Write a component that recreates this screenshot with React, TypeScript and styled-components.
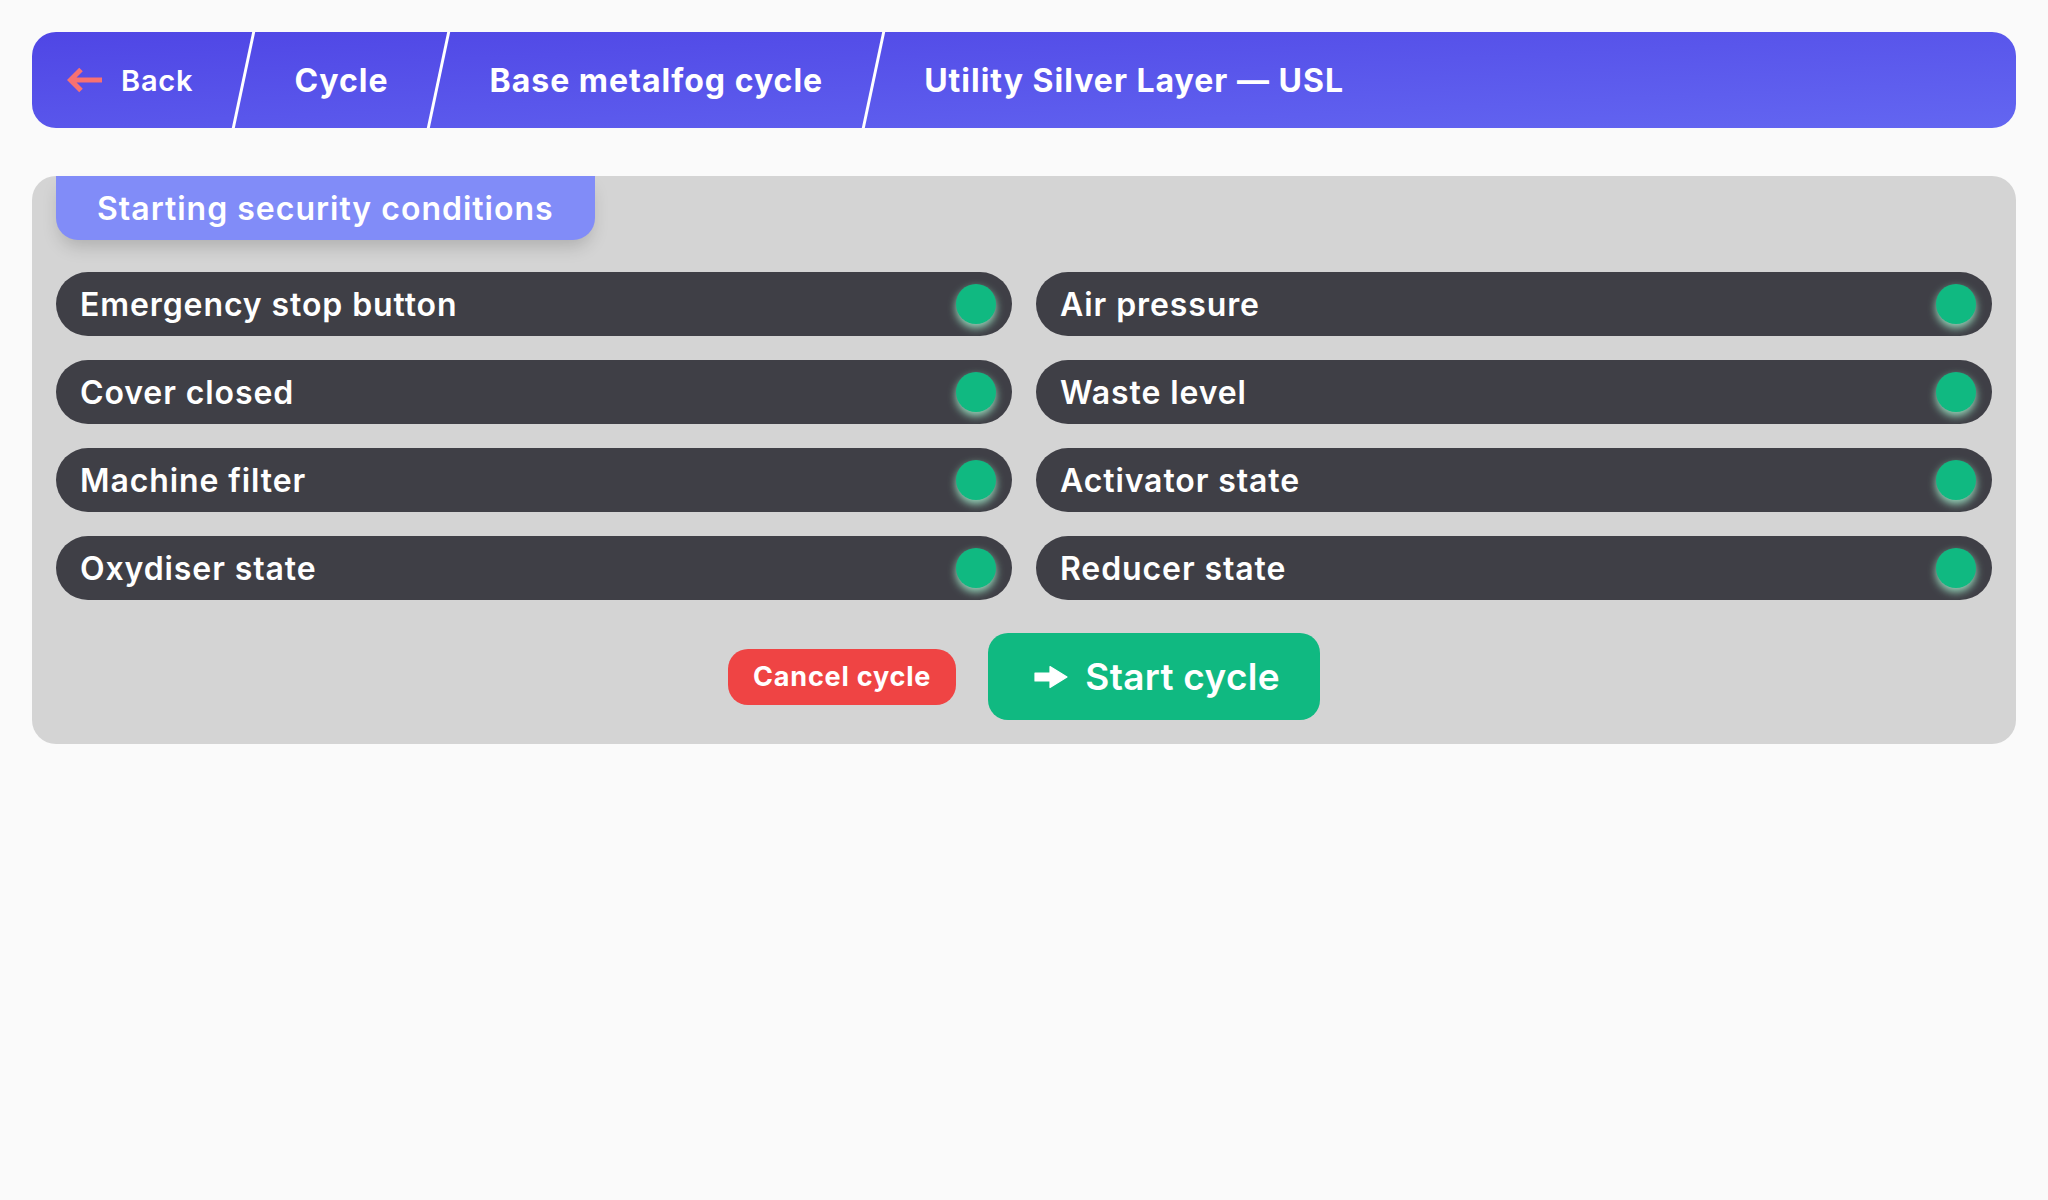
import React from "react";
import styled, { createGlobalStyle } from "styled-components";

const GlobalStyle = createGlobalStyle`
  html, body {
    margin: 0;
    padding: 0;
    background: #fafafa;
  }
  body {
    font-family: Inter, "Open Sans", "Noto Sans", sans-serif;
    -webkit-font-smoothing: antialiased;
  }
  * { box-sizing: border-box; }
`;

const Page = styled.div`
  padding: 32px;
  min-height: 1200px;
  display: flex;
  flex-direction: column;
  gap: 48px;
`;

const Header = styled.nav`
  height: 96px;
  border-radius: 24px;
  background: linear-gradient(to bottom right, #4f46e5, #6366f1);
  display: flex;
  align-items: stretch;
  overflow: hidden;
`;

const Crumb = styled.div<{ $first?: boolean }>`
  display: flex;
  align-items: center;
  gap: 18px;
  padding: 0 49px 0 ${(p) => (p.$first ? "35px" : "49px")};
  color: #ffffff;
  font-size: ${(p) => (p.$first ? "29px" : "32px")};
  font-weight: ${(p) => (p.$first ? 600 : 700)};
  letter-spacing: ${(p) => (p.$first ? "0.8px" : "1px")};
  white-space: nowrap;
  cursor: pointer;
`;

const Separator = styled.div`
  width: 3px;
  flex: none;
  background: #ffffff;
  transform: skewX(-12deg);
`;

const Panel = styled.section`
  background: #d4d4d4;
  border-radius: 24px;
  padding: 0 24px 24px;
  display: flex;
  flex-direction: column;
`;

const Tab = styled.div`
  align-self: flex-start;
  height: 64px;
  padding: 0 41px;
  display: flex;
  align-items: center;
  background: #818cf8;
  color: #ffffff;
  border-radius: 0 0 22px 22px;
  font-size: 32px;
  font-weight: 600;
  letter-spacing: 1px;
  box-shadow: 0 10px 18px -4px rgba(0, 0, 0, 0.18);
`;

const Grid = styled.div`
  margin-top: 32px;
  display: grid;
  grid-template-columns: 1fr 1fr;
  gap: 24px;
`;

const Row = styled.div`
  height: 64px;
  border-radius: 32px;
  background: #3f3f46;
  color: #ffffff;
  display: flex;
  align-items: center;
  justify-content: space-between;
  padding: 0 16px 0 24px;
  font-size: 32px;
  font-weight: 600;
  letter-spacing: 0.9px;
`;

const Dot = styled.span<{ $ok: boolean }>`
  width: 40px;
  height: 40px;
  border-radius: 50%;
  background: ${(p) => (p.$ok ? "#10b981" : "#ef4444")};
  box-shadow: 0 4px 9px ${(p) =>
    p.$ok ? "rgba(167, 243, 208, 0.85)" : "rgba(254, 202, 202, 0.85)"};
`;

const Actions = styled.div`
  margin-top: 33px;
  display: flex;
  justify-content: center;
  align-items: center;
  gap: 32px;
`;

const CancelButton = styled.button`
  height: 56px;
  padding: 0 25px;
  border: none;
  border-radius: 20px;
  background: #ef4444;
  color: #ffffff;
  font-family: inherit;
  font-size: 27px;
  font-weight: 700;
  letter-spacing: 0.8px;
  cursor: pointer;
`;

const StartButton = styled.button`
  height: 87px;
  padding: 0 40px 0 46px;
  border: none;
  border-radius: 20px;
  background: #10b981;
  color: #ffffff;
  display: flex;
  align-items: center;
  gap: 17px;
  font-family: inherit;
  font-size: 37px;
  font-weight: 600;
  letter-spacing: 0.3px;
  cursor: pointer;
`;

const BackArrow = () => (
  <svg width="36" height="26" viewBox="0 0 36 26" fill="none">
    <path
      d="M14 2.5 L3.5 13 L14 23.5 M3.5 13 H35"
      stroke="#f87171"
      strokeWidth="5"
      strokeLinejoin="miter"
      strokeLinecap="butt"
    />
  </svg>
);

const StartArrow = () => (
  <svg width="34" height="24" viewBox="0 0 34 24">
    <path
      d="M1 8 H16 V1.5 L33 12 L16 22.5 V16 H1 Z"
      fill="#ffffff"
      stroke="#ffffff"
      strokeWidth="1.2"
      strokeLinejoin="round"
    />
  </svg>
);

const crumbs = ["Cycle", "Base metalfog cycle", "Utility Silver Layer — USL"];

const conditions = [
  "Emergency stop button",
  "Air pressure",
  "Cover closed",
  "Waste level",
  "Machine filter",
  "Activator state",
  "Oxydiser state",
  "Reducer state",
];

export default function App() {
  return (
    <>
      <GlobalStyle />
      <Page>
        <Header>
          <Crumb $first>
            <BackArrow />
            <span>Back</span>
          </Crumb>
          {crumbs.map((c) => (
            <React.Fragment key={c}>
              <Separator />
              <Crumb>{c}</Crumb>
            </React.Fragment>
          ))}
        </Header>
        <Panel>
          <Tab>Starting security conditions</Tab>
          <Grid>
            {conditions.map((c) => (
              <Row key={c}>
                <span>{c}</span>
                <Dot $ok />
              </Row>
            ))}
          </Grid>
          <Actions>
            <CancelButton>Cancel cycle</CancelButton>
            <StartButton>
              <StartArrow />
              <span>Start cycle</span>
            </StartButton>
          </Actions>
        </Panel>
      </Page>
    </>
  );
}
